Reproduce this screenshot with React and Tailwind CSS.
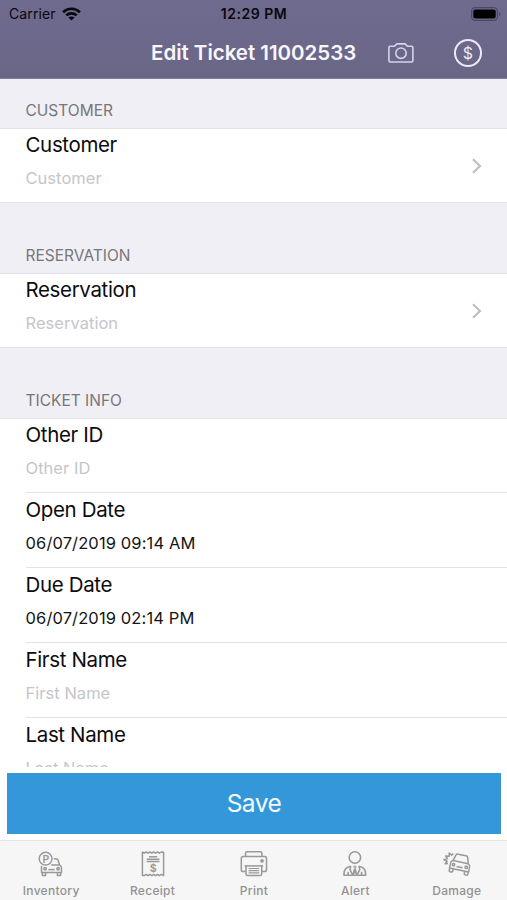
function WifiIcon() {
  return (
    <svg className="h-[14px] w-[19px]" viewBox="0 0 19 14" fill="none" stroke="#08080c" strokeWidth="2.7">
      <path d="M1.1 5.2C5.7 0.6 13.3 0.6 17.9 5.2" />
      <path d="M4.3 8.4C7.2 5.6 11.8 5.6 14.7 8.4" />
      <path d="M9.5 13.6L6.4 10.5C8.1 9 10.9 9 12.6 10.5Z" fill="#08080c" stroke="none" />
    </svg>
  );
}

function BatteryIcon() {
  return (
    <svg className="h-[14px] w-[30px]" viewBox="0 0 30 14" fill="none">
      <rect x="0.6" y="0.6" width="25.8" height="12.8" rx="3.6" stroke="#4b4962" strokeWidth="1.2" />
      <rect x="2.3" y="2.4" width="22.4" height="9.2" rx="2" fill="#000" />
      <path d="M28 4.8C30 5.6 30 8.4 28 9.2Z" fill="#4b4962" />
    </svg>
  );
}

function CameraIcon() {
  return (
    <svg className="h-[20px] w-[26px]" viewBox="0 0 26 20" fill="none" stroke="#d6d3ec" strokeWidth="1.6" strokeLinejoin="round">
      <path d="M2.3 3.2H6.6L8.6 0.9H17.2L19.3 3.2H23.5Q24.9 3.2 24.9 4.6V17.6Q24.9 19 23.5 19H2.3Q0.9 19 0.9 17.6V4.6Q0.9 3.2 2.3 3.2Z" />
      <circle cx="13" cy="10.2" r="5.2" />
    </svg>
  );
}

function InventoryIcon() {
  return (
    <svg className="h-[26px] w-[26px]" viewBox="0 0 26 26" fill="none" stroke="#999" strokeWidth="1.5" strokeLinejoin="round">
      <circle cx="7.6" cy="7.7" r="6.4" />
      <text x="7.9" y="11.6" fontSize="10.5" fontWeight="600" textAnchor="middle" fill="#999" stroke="none">P</text>
      <path d="M15.8 7.8H18Q19.6 7.8 20.1 9.2L21.5 14H13.2" />
      <path d="M3.5 14.8V21.6H23.5V17Q23.5 14.8 21.4 14" />
      <path d="M4.4 21.8V24.4H7.6V21.8M19.4 21.8V24.4H22.6V21.8" />
      <path d="M10.4 18.6H16.6" />
      <circle cx="7.1" cy="17.8" r="1.2" />
      <circle cx="20.1" cy="17.8" r="1.2" />
    </svg>
  );
}

function ReceiptIcon() {
  return (
    <svg className="h-[26px] w-[26px]" viewBox="0 0 26 26" fill="none" stroke="#999" strokeWidth="1.5" strokeLinejoin="round">
      <path d="M2.4 1L4.2 2.2L6.1 1L8 2.2L9.9 1L11.8 2.2L13.7 1L15.6 2.2L17.5 1L19.4 2.2L21.2 1L23.6 1.2V24.6L21.4 23.4L19.4 24.6L17.5 23.4L15.6 24.6L13.7 23.4L11.8 24.6L9.9 23.4L8 24.6L6.1 23.4L4.2 24.6L2.4 24.6Z" />
      <path d="M9 5.8H17.2M6.7 8.2H19.5M6.7 10.6H19.5" />
      <text x="13.1" y="21.2" fontSize="10.5" fontWeight="700" textAnchor="middle" fill="#999" stroke="none">$</text>
    </svg>
  );
}

function PrintIcon() {
  return (
    <svg className="h-[26px] w-[28px]" viewBox="0 0 28 26" fill="none" stroke="#999" strokeWidth="1.5" strokeLinejoin="round">
      <path d="M5.5 5.5V2.2Q5.5 0.8 6.9 0.8H20.5Q21.9 0.8 21.9 2.2V5.5" />
      <path d="M6 20.6H3.2Q1.3 20.6 1.3 18.7V7.5Q1.3 5.6 3.2 5.6H24.6Q26.5 5.6 26.5 7.5V18.7Q26.5 20.6 24.6 20.6H21.7" />
      <path d="M4.6 14.9H23.2" />
      <path d="M6 15V23Q6 24.6 7.6 24.6H20.1Q21.7 24.6 21.7 23V15" />
      <path d="M8.6 17.5H19.2M8.6 19.7H19.2M8.6 21.9H19.2" strokeWidth="1.2" />
      <circle cx="22" cy="9.9" r="1.1" fill="#999" />
    </svg>
  );
}

function AlertIcon() {
  return (
    <svg className="h-[26px] w-[26px]" viewBox="0 0 26 26" fill="none" stroke="#999" strokeWidth="1.6" strokeLinejoin="round">
      <circle cx="12.9" cy="6.5" r="5.7" />
      <path d="M8.8 15.2Q2 16.4 2 22.8V24.3H23.6V22.8Q23.6 16.4 16.9 15.2" />
      <path d="M8.8 15.2L8 18.6L10.8 24.2L12.9 18.6L15 24.2L17.8 18.6L16.9 15.2M6.1 20.8V24.2M19.6 20.8V24.2" />
      <path d="M11.7 15.2H14.1L13.5 17.4L13.9 20.6L12.9 22.4L11.9 20.6L12.3 17.4Z" strokeWidth="1" />
    </svg>
  );
}

function DamageIcon() {
  return (
    <svg className="h-[26px] w-[28px]" viewBox="0 0 28 26" fill="none" stroke="#999" strokeWidth="1.5" strokeLinejoin="round">
      <path d="M10.2 2.6L8.6 4.1L6.2 2L6.2 5.2L2.6 4.9L4.4 7.5L1 8.8L4.1 10.2L2.2 12.8L5 12.4" />
      <g transform="rotate(12 17 14)">
        <path d="M9.3 11.1L10.9 5.2Q11.4 3.8 12.9 3.8H21Q22.5 3.8 23 5.2L24.8 11.1" />
        <path d="M9.3 11.1H24.8Q26.8 11.9 26.8 13.9V19H7.4V13.9Q7.4 11.9 9.3 11.1Z" />
        <path d="M14 16.2H20" />
        <path d="M7.6 19V21.6Q7.6 22.6 8.6 22.6H10.2Q11.2 22.6 11.2 21.6V19M23 19V21.6Q23 22.6 24 22.6H25.6Q26.6 22.6 26.6 21.6V19" />
        <circle cx="10.6" cy="15" r="1.2" />
        <circle cx="23.6" cy="15" r="1.2" />
      </g>
    </svg>
  );
}

const tabs = [
  { label: 'Inventory', icon: InventoryIcon },
  { label: 'Receipt', icon: ReceiptIcon },
  { label: 'Print', icon: PrintIcon },
  { label: 'Alert', icon: AlertIcon },
  { label: 'Damage', icon: DamageIcon },
];

const ticketFields = [
  { label: 'Other ID' },
  { label: 'Open Date', value: '06/07/2019 09:14 AM' },
  { label: 'Due Date', value: '06/07/2019 02:14 PM' },
  { label: 'First Name' },
  { label: 'Last Name' },
];

function SectionHeader({ title, className }) {
  return (
    <div className={`flex shrink-0 items-end border-b border-[#e2e1e6] bg-[#f0eff5] pb-[5px] pl-[25.5px] ${className}`}>
      <h2 className="text-[15.5px] leading-6 text-[#77767b]">{title}</h2>
    </div>
  );
}

function FieldText({ label, value }) {
  return (
    <div className="flex-1">
      <div className="text-[20.5px] leading-7 tracking-[-0.36px] text-[#0c0c0c]">{label}</div>
      <div className={`pt-[7px] text-[16.5px] leading-6 ${value ? 'tracking-[0.12px] text-[#141414]' : 'tracking-[0.03px] text-[#c6c6c8]'}`}>
        {value || label}
      </div>
    </div>
  );
}

function LinkRow({ label }) {
  return (
    <button className="flex h-[74px] w-full shrink-0 items-start border-b border-[#e2e1e6] pt-[2px] pr-[25px] pl-[25.5px] text-left">
      <FieldText label={label} />
      <svg className="mt-[27px] h-4 w-[10px]" viewBox="0 0 10 16" fill="none" stroke="#bfbfc2" strokeWidth="2.2">
        <path d="M1 1.3L8 8L1 14.7" />
      </svg>
    </button>
  );
}

export default function App() {
  return (
    <div className="flex h-[900px] w-[507px] flex-col overflow-hidden bg-white font-['Inter',sans-serif]">
      <header className="h-[79px] shrink-0 border-b border-[#7f7c9c] bg-linear-to-b from-[#6e6b8f] to-[#696686]">
        <div className="grid h-[27px] grid-cols-[1fr_auto_1fr] items-center pr-[6px] pl-[9px] text-[14px] text-[#08080c]">
          <div className="flex items-center gap-[6px]">
            <span className="tracking-[0.1px]">Carrier</span>
            <WifiIcon />
          </div>
          <span className="pr-[2px] text-center font-semibold tracking-[0.5px]">12:29 PM</span>
          <div className="flex justify-end">
            <BatteryIcon />
          </div>
        </div>
        <div className="flex h-[51px] items-center pr-[25px]">
          <h1 className="mt-[2px] ml-[151px] w-[237px] text-[20.5px] font-semibold tracking-[-0.02px] whitespace-nowrap text-[#f8f7ff]">
            Edit Ticket 11002533
          </h1>
          <button aria-label="Take photo">
            <CameraIcon />
          </button>
          <button
            aria-label="Charges"
            className="ml-auto flex size-[28px] items-center justify-center rounded-full border-2 border-[#eceafa] text-[16px] text-[#eceafa]"
          >
            $
          </button>
        </div>
      </header>

      <main className="flex h-[688px] shrink-0 flex-col overflow-hidden">
        <SectionHeader title="CUSTOMER" className="h-[50px]" />
        <LinkRow label="Customer" />
        <SectionHeader title="RESERVATION" className="h-[71px]" />
        <LinkRow label="Reservation" />
        <SectionHeader title="TICKET INFO" className="h-[71px]" />
        {ticketFields.map((field, i) => (
          <div
            key={field.label}
            className={`ml-[25.5px] flex shrink-0 items-start border-b border-[#e2e1e4] ${i === 0 ? 'h-[74px] pt-[2px]' : 'h-[75px] pt-[3px]'}`}
          >
            <FieldText label={field.label} value={field.value} />
          </div>
        ))}
      </main>

      <div className="h-[73px] shrink-0 px-[7px] pt-[6px]">
        <button className="h-[61px] w-[494px] bg-[#3397da] text-[24.5px] tracking-[-0.5px] text-[#f4faff]">Save</button>
      </div>

      <nav className="grid h-[60px] shrink-0 grid-cols-5 border-t border-[#e3e3e3] bg-[#f6f6f6]">
        {tabs.map(({ label, icon: Icon }) => (
          <button key={label} className="flex flex-col items-center pt-[10px] pl-px">
            <Icon />
            <span className="mt-[6px] text-[12px] leading-4 font-medium tracking-[0.3px] text-[#929292]">{label}</span>
          </button>
        ))}
      </nav>
    </div>
  );
}
